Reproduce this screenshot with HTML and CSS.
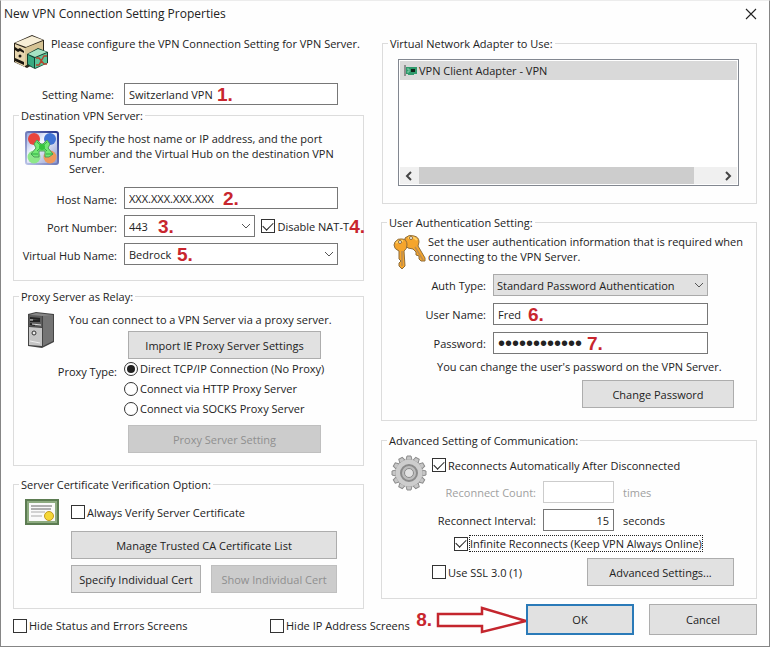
FILE: index.html
```html
<!DOCTYPE html>
<html lang="en">
<head>
<meta charset="utf-8">
<title>New VPN Connection Setting Properties</title>
<link rel="stylesheet" href="styles.css">
</head>
<body>
<form class="dialog">
  <header class="titlebar">
    <h1>New VPN Connection Setting Properties</h1>
    <button type="button" class="close" aria-label="Close"><svg width="12" height="12" viewBox="0 0 12 12"><path d="M1 1L11 11M11 1L1 11" stroke="#222" stroke-width="1.1" fill="none"/></svg></button>
  </header>

  <div class="columns">
    <div class="column column-left">
      <div class="intro">
        <svg class="icon" width="36" height="36" viewBox="0 0 36 36">
          <path d="M1 9L19 1L31 6V24L14 34L1 28Z" fill="#2b2418"/>
          <path d="M2 9L19 2L30 6L13 13Z" fill="#f7eed6"/>
          <path d="M2 10L12 14V33L2 28Z" fill="#e6d5ae"/>
          <path d="M12 14L30 7V22L12 32Z" fill="#d6c394"/>
          <path d="M2 13L5 15L7 14L11 17V19L7 17L5 18L2 16ZM2 24L11 28V31L2 27Z" fill="#19150e"/>
          <circle cx="7" cy="22" r="1.5" fill="#19150e"/>
          <path d="M14 20L25 14L35 18V29L22 35L14 31Z" fill="#13402f"/>
          <path d="M15 20L25 15L34 18L22 23Z" fill="#a5e3c3"/>
          <path d="M15 21L21 24V34L15 30Z" fill="#38a981"/>
          <path d="M22 24L34 19V29L22 34Z" fill="#5bc59b"/>
          <path d="M23 24H26L31 30H34M23 31H26L31 22H34" fill="none" stroke="#b2442c" stroke-width="1.4"/>
        </svg>
        <p>Please configure the VPN Connection Setting for VPN Server.</p>
      </div>

      <div class="form setting-name">
        <label for="name">Setting Name:</label>
        <div class="field"><input id="name" type="text" value="Switzerland VPN"><b class="mark mark-1">1.</b></div>
      </div>

      <fieldset class="group group-server">
        <legend>Destination VPN Server:</legend>
        <div class="about">
          <svg class="icon" width="34" height="34" viewBox="0 0 34 34">
            <defs>
              <linearGradient id="tile" x1="0" x2="1" y1="0" y2="1"><stop offset="0" stop-color="#8fa0dc"/><stop offset=".4" stop-color="#f5f8ff"/><stop offset="1" stop-color="#8794cc"/></linearGradient>
              <linearGradient id="rim" x1="0" x2="1" y1="1" y2="0"><stop offset="0" stop-color="#b9c2e6"/><stop offset="1" stop-color="#26348c"/></linearGradient>
            </defs>
            <rect x="1" y="1" width="32" height="32" rx="2" fill="url(#tile)" stroke="url(#rim)" stroke-width="2"/>
            <circle cx="9" cy="8" r="6" fill="#e8443c"/><circle cx="25" cy="8" r="6" fill="#3f72d4"/>
            <circle cx="9" cy="26" r="6.500" fill="#8ee88a"/><circle cx="25" cy="26" r="6.500" fill="#f0985a"/>
            <path d="M12 9L16 13H18L22 9L25 13L23 17L28 23L24 26H20V20H14V26H9L6 23L11 17L9 13Z" fill="#72ea74" stroke="#4f9c5c"/>
            <path d="M12 11L22 20M22 11L12 20M6 23H13M21 23H28" stroke="#2fa944" fill="none"/>
            <circle cx="17" cy="16" r="3" fill="#35c43d"/>
          </svg>
          <p>Specify the host name or IP address, and the port number and the Virtual Hub on the destination VPN Server.</p>
        </div>
        <div class="form">
          <label for="host">Host Name:</label>
          <div class="field"><input id="host" type="text" value="XXX.XXX.XXX.XXX"><b class="mark mark-2">2.</b></div>
          <label for="port">Port Number:</label>
          <div class="port-row">
            <div class="field field-port"><select id="port"><option>443</option></select><svg class="chevron" width="10" height="6" viewBox="0 0 10 6"><path d="M1 1L5 5L9 1"/></svg><b class="mark mark-3">3.</b></div>
            <label class="check"><input type="checkbox" checked>Disable NAT-T</label>
            <b class="mark mark-4">4.</b>
          </div>
          <label for="hub">Virtual Hub Name:</label>
          <div class="field"><select id="hub"><option>Bedrock</option></select><svg class="chevron" width="10" height="6" viewBox="0 0 10 6"><path d="M1 1L5 5L9 1"/></svg><b class="mark mark-5">5.</b></div>
        </div>
      </fieldset>

      <fieldset class="group group-proxy">
        <legend>Proxy Server as Relay:</legend>
        <div class="about">
          <svg class="icon" width="34" height="36" viewBox="0 0 34 36">
            <path d="M3 2L11 0L29 2V30L17 36L3 34Z" fill="#444"/>
            <path d="M18 3L28 3V29L18 34Z" fill="#747474"/>
            <path d="M4 3L17 4V15L4 14Z" fill="#5c5c5c"/>
            <path d="M4 15L17 16V34L4 33Z" fill="#c5c5c5"/>
            <path d="M4 3L11 1L28 3L17 4Z" fill="#888"/>
            <path d="M5 6L15 7M5 9H15M5 12L10 13" stroke="#222" stroke-width="2"/>
            <path d="M7 12L16 13M5 8H8" stroke="#ddd"/>
            <circle cx="9" cy="21" r="2" fill="#eee" stroke="#333"/>
            <path d="M5 29L15 31" stroke="#eee"/>
          </svg>
          <p>You can connect to a VPN Server via a proxy server.</p>
        </div>
        <button type="button" class="btn btn-proxy">Import IE Proxy Server Settings</button>
        <div class="proxy-type" role="radiogroup" aria-labelledby="ptype">
          <span id="ptype">Proxy Type:</span>
          <div class="radios">
            <label class="check"><input type="radio" name="proxy" checked>Direct TCP/IP Connection (No Proxy)</label>
            <label class="check"><input type="radio" name="proxy">Connect via HTTP Proxy Server</label>
            <label class="check"><input type="radio" name="proxy">Connect via SOCKS Proxy Server</label>
          </div>
        </div>
        <button type="button" class="btn btn-proxy" disabled>Proxy Server Setting</button>
      </fieldset>

      <fieldset class="group group-cert">
        <legend>Server Certificate Verification Option:</legend>
        <div class="about">
          <svg class="icon" width="34" height="26" viewBox="0 0 34 26">
            <rect x="1" y="1" width="32" height="24" fill="#fff" stroke="#5c7c52" stroke-width="2"/>
            <rect x="3" y="3" width="28" height="20" fill="#fafafa" stroke="#8dab80" stroke-width="2"/>
            <path d="M6 7H27M6 10H26" stroke="#666"/><path d="M6 17H17M6 13H20" stroke="#aaa"/>
            <circle cx="24" cy="17" r="4.500" fill="#f5d737" stroke="#c39a20"/>
          </svg>
          <label class="check"><input type="checkbox">Always Verify Server Certificate</label>
        </div>
        <div class="cert-buttons">
          <button type="button" class="btn wide">Manage Trusted CA Certificate List</button>
          <button type="button" class="btn">Specify Individual Cert</button>
          <button type="button" class="btn" disabled>Show Individual Cert</button>
        </div>
      </fieldset>

      <div class="hide-options">
        <label class="check"><input type="checkbox">Hide Status and Errors Screens</label>
        <label class="check"><input type="checkbox">Hide IP Address Screens</label>
      </div>
    </div>

    <div class="column column-right">
      <fieldset class="group group-adapter">
        <legend>Virtual Network Adapter to Use:</legend>
        <div class="list">
          <div class="list-item">
            <svg width="14" height="12" viewBox="0 0 14 12"><path d="M1 0V11" stroke="#777" stroke-width="1.500"/><path d="M2 2H13V9H10V10H4V9H2Z" fill="#2f9a6c"/><rect x="7" y="4" width="4" height="3" fill="#10231a"/><path d="M3 4H5V7H3" fill="none" stroke="#85d4ae"/></svg>
            <span>VPN Client Adapter - VPN</span>
          </div>
          <div class="scrollbar">
            <svg width="8" height="10" viewBox="0 0 8 10"><path d="M6 1L2 5L6 9"/></svg>
            <div class="track"><div class="thumb"></div></div>
            <svg width="8" height="10" viewBox="0 0 8 10"><path d="M2 1L6 5L2 9"/></svg>
          </div>
        </div>
      </fieldset>

      <fieldset class="group group-auth">
        <legend>User Authentication Setting:</legend>
        <div class="about">
          <svg class="icon" width="34" height="36" viewBox="0 0 34 36">
            <g stroke="#8d6d3c" stroke-linejoin="round">
              <path d="M12 4Q16 0 21 2Q26 3 26 8L25 12L32 24V27L28 27L26 25V22L23 21V18L20 15Q14 15 12 11Z" fill="#f5a52c"/>
              <path d="M2 8Q5 4 9 5Q14 5 14 11Q14 15 11 17L12 32L9 35L6 32V29L8 27L6 25V17Q1 15 1 11Z" fill="#f5a52c"/>
            </g>
            <path d="M22 13L30 26M9 17V32" stroke="#b98d54" stroke-width="1.500"/>
            <path d="M3 9Q6 6 10 7M15 4Q20 2 24 6" fill="none" stroke="#ffd166" stroke-width="2"/>
            <circle cx="7" cy="8" r="1.500" fill="#fff" stroke="#8d6d3c"/><circle cx="18" cy="4" r="1.500" fill="#fff" stroke="#8d6d3c"/>
          </svg>
          <p>Set the user authentication information that is required when connecting to the VPN Server.</p>
        </div>
        <div class="form">
          <label for="auth">Auth Type:</label>
          <div class="field"><select id="auth" class="gray"><option>Standard Password Authentication</option></select><svg class="chevron" width="10" height="6" viewBox="0 0 10 6"><path d="M1 1L5 5L9 1"/></svg></div>
          <label for="user">User Name:</label>
          <div class="field"><input id="user" type="text" value="Fred"><b class="mark mark-6">6.</b></div>
          <label for="pass">Password:</label>
          <div class="field"><input id="pass" type="password" value="abcdefghijkl"><b class="mark mark-7">7.</b></div>
        </div>
        <p class="note">You can change the user's password on the VPN Server.</p>
        <button type="button" class="btn btn-change">Change Password</button>
      </fieldset>

      <fieldset class="group group-advanced">
        <legend>Advanced Setting of Communication:</legend>
        <div class="about">
          <svg class="icon" width="36" height="36" viewBox="-18 -18 36 36">
            <g fill="#c6c6c6" stroke="#8c8c8c">
              <path id="tooth" d="M-3 -13L-2 -17H2L3 -13Z"/>
              <use href="#tooth" transform="rotate(30)"/><use href="#tooth" transform="rotate(60)"/><use href="#tooth" transform="rotate(90)"/>
              <use href="#tooth" transform="rotate(120)"/><use href="#tooth" transform="rotate(150)"/><use href="#tooth" transform="rotate(180)"/>
              <use href="#tooth" transform="rotate(210)"/><use href="#tooth" transform="rotate(240)"/><use href="#tooth" transform="rotate(270)"/>
              <use href="#tooth" transform="rotate(300)"/><use href="#tooth" transform="rotate(330)"/>
            </g>
            <circle r="13.500" fill="#cdcdcd"/>
            <circle r="8" fill="#bdbdbd" stroke="#8b8b8b" stroke-width="2"/>
            <circle r="4.500" fill="#e2e2e2" stroke="#8b8b8b"/>
          </svg>
          <label class="check"><input type="checkbox" checked>Reconnects Automatically After Disconnected</label>
        </div>
        <div class="reconnect">
          <label for="count" class="off">Reconnect Count:</label><input id="count" type="text" disabled><span class="off">times</span>
          <label for="interval">Reconnect Interval:</label><input id="interval" type="text" value="15"><span>seconds</span>
        </div>
        <label class="check infinite"><input type="checkbox" checked><span class="focus">Infinite Reconnects (Keep VPN Always Online)</span></label>
        <div class="ssl-row">
          <label class="check"><input type="checkbox">Use SSL 3.0 (1)</label>
          <button type="button" class="btn btn-advanced">Advanced Settings...</button>
        </div>
      </fieldset>

      <div class="actions">
        <b class="mark-8">8.</b>
        <svg class="arrow" width="92" height="28" viewBox="0 0 92 28"><path d="M2 8H46V2L90 15L46 26V20H2Z" fill="#fff" stroke="#c4262e" stroke-width="2.500"/></svg>
        <button type="submit" class="btn btn-ok">OK</button>
        <button type="button" class="btn btn-cancel">Cancel</button>
      </div>
    </div>
  </div>
</form>
</body>
</html>
```
FILE: styles.css
```css
* { box-sizing: border-box; }

body {
  margin: 0;
  background: #fefefe;
  color: #222;
  font: 11px/15px "Open Sans", "Noto Sans", sans-serif;
}

h1, p { margin: 0; font-weight: normal; }

button, input, select { margin: 0; font: inherit; color: inherit; }

.icon { display: block; flex: none; }

.dialog {
  min-height: 100vh;
  border: 1px solid #858585;
  border-top-color: #ececec;
}

.titlebar {
  display: flex;
  justify-content: space-between;
  align-items: center;
  height: 25px;
  padding: 0 12px 0 3px;
}

.titlebar h1 { font-size: 12px; }

.close {
  display: flex;
  padding: 0;
  border: 0;
  background: none;
}

.columns {
  display: grid;
  grid-template-columns: 351fr 376fr;
  gap: 17px;
  padding: 0 12px 8px;
}

.column {
  display: flex;
  flex-direction: column;
  min-width: 0;
}

.column-right { padding-top: 10px; }

.intro {
  display: flex;
  gap: 2px;
  padding-top: 8px;
  white-space: nowrap;
}

.intro p { padding-top: 2px; }

/* Label and field grids */
.form {
  display: grid;
  grid-template-columns: 104px 1fr;
  gap: 6px 7px;
  padding-right: 25px;
  align-items: center;
}

.form > label { text-align: right; white-space: nowrap; }

.setting-name { margin: 13px 0 3px; padding-right: 26px; }
.setting-name > label { padding-right: 3px; }

.field { position: relative; }

.field input, .field select {
  display: block;
  width: 100%;
  height: 22px;
  padding: 0 4px;
  border: 1px solid #777;
  border-radius: 0;
  background: #fff;
  appearance: none;
}

.field select.gray { padding: 0 3px; border-color: #aaa; background: #e1e1e1; }

.field input[type="password"] { font-family: "Liberation Sans", Arial, sans-serif; font-size: 20px; }

.chevron {
  position: absolute;
  top: 8px;
  right: 4px;
  fill: none;
  stroke: #555;
  pointer-events: none;
}

/* Red step numbers */
.mark, .mark-8 {
  color: #c8262e;
  font: bold 19px/22px "Liberation Sans", Arial, sans-serif;
}

.mark { position: absolute; top: 1px; }
.mark-1 { left: 93px; }
.mark-2 { left: 99px; }
.mark-3 { left: 34px; }
.mark-4 { right: -27px; }
.mark-5 { left: 53px; }
.mark-6 { left: 35px; }
.mark-7 { left: 94px; }

/* Group boxes */
.group {
  min-width: 0;
  margin: 0;
  padding: 0;
  border: 1px solid #dcdcdc;
}

.group legend {
  margin-left: 5px;
  padding: 0 2px;
  line-height: 15px;
}

.about {
  display: flex;
  gap: 10px;
}

.group-server { padding-bottom: 15px; }
.group-server .about { padding: 8px 24px 11px 11px; }
.group-server .form { grid-template-columns: 103px 1fr; }
.group-server .form > label { padding-top: 3px; }

.port-row {
  position: relative;
  display: flex;
  align-items: center;
  gap: 6px;
}

.field-port { flex: 1; }

.port-row .check { margin-right: -11px; }

.check {
  display: flex;
  align-items: center;
  gap: 2px;
  white-space: nowrap;
}

.check input {
  flex: none;
  display: grid;
  place-items: center;
  width: 14px;
  height: 14px;
  border: 1px solid #333;
  background: #fff;
  appearance: none;
}

.check input[type="checkbox"]:checked::before {
  content: "";
  width: 9px;
  height: 5px;
  margin-top: -3px;
  border: solid #222;
  border-width: 0 0 1px 1px;
  transform: rotate(-45deg);
}

.check input[type="radio"] { border-radius: 50%; }

.check input[type="radio"]:checked::before {
  content: "";
  width: 8px;
  height: 8px;
  border-radius: 50%;
  background: #222;
}

.btn {
  height: 28px;
  padding: 0;
  border: 1px solid #adadad;
  background: #e1e1e1;
  white-space: nowrap;
}

.btn:disabled { border-color: #bfbfbf; background: #ccc; color: #8f8f8f; }

.group-proxy { margin-top: 8px; padding-bottom: 12px; }
.group-proxy .about { height: 27px; padding: 8px 0 0 11px; }
.btn-proxy { display: block; width: 193px; margin-left: 114px; }

.proxy-type {
  display: grid;
  grid-template-columns: 103px 1fr;
  gap: 7px;
  margin: 2px 0 9px;
}

.proxy-type > span { padding-top: 3px; text-align: right; }

.radios { display: grid; gap: 5px; }

.group-cert { margin-top: 11px; padding-bottom: 15px; }
.group-cert .about { align-items: center; gap: 12px; padding: 7px 0 6px 11px; }

.cert-buttons {
  display: grid;
  grid-template-columns: 130fr 126fr;
  gap: 6px 10px;
  padding: 0 26px 0 57px;
}

.cert-buttons .wide { grid-column: 1 / -1; }

.hide-options {
  display: grid;
  grid-template-columns: 257px max-content;
  margin-top: 9px;
}

.group-adapter { margin-left: 1px; padding: 8px 17px 17px 15px; }
.group-adapter legend { margin-left: -10px; }

.list {
  display: flex;
  flex-direction: column;
  justify-content: space-between;
  height: 127px;
  padding: 1px;
  border: 1px solid #828790;
  background: #fff;
}

.list-item {
  display: flex;
  align-items: center;
  gap: 1px;
  height: 19px;
  padding-left: 4px;
  background: #d9d9d9;
}

.scrollbar {
  display: flex;
  align-items: center;
  gap: 6px;
  height: 17px;
  padding: 0 5px;
  background: #f0f0f0;
}

.scrollbar svg { fill: none; stroke: #444; stroke-width: 2; }
.track { flex: 1; height: 100%; }
.thumb { width: 92%; height: 100%; background: #cdcdcd; }

.group-auth { margin-top: 11px; padding-bottom: 12px; }
.group-auth .about { gap: 1px; padding: 4px 10px 4px 11px; }
.group-auth .form { gap: 7px; padding-right: 48px; }

.note { padding: 5px 0 6px 55px; }

.btn-change { display: block; width: 152px; margin: 0 22px 0 auto; }

.group-advanced { margin-top: 12px; padding-bottom: 12px; }
.group-advanced .about { gap: 5px; height: 33px; padding: 7px 0 0 9px; }
.group-advanced .about .check { height: 20px; }

.reconnect {
  display: grid;
  grid-template-columns: 154px 71px 1fr;
  gap: 6px 7px;
  align-items: center;
}

.reconnect label { text-align: right; }
.reconnect span { padding-left: 2px; }

.reconnect input {
  min-width: 0;
  height: 22px;
  padding: 0 4px;
  border: 1px solid #777;
  background: #fff;
  text-align: right;
}

.reconnect input:disabled { border-color: #ccc; }
.off { color: #a0a0a0; }

.infinite { margin: 5px 0 7px 72px; }
.focus { outline: 1px dotted #222; }

.ssl-row {
  display: flex;
  align-items: center;
  justify-content: space-between;
  padding: 0 22px 0 50px;
}

.btn-advanced { width: 147px; }

.actions {
  display: flex;
  align-items: center;
  justify-content: flex-end;
  margin-top: 5px;
}

.mark-8 { margin-right: 4px; }
.arrow { margin-right: -2px; }
.btn-ok, .btn-cancel { width: 108px; height: 31px; }
.btn-ok { margin-right: 15px; border: 2px solid #2a7ab8; }
```
